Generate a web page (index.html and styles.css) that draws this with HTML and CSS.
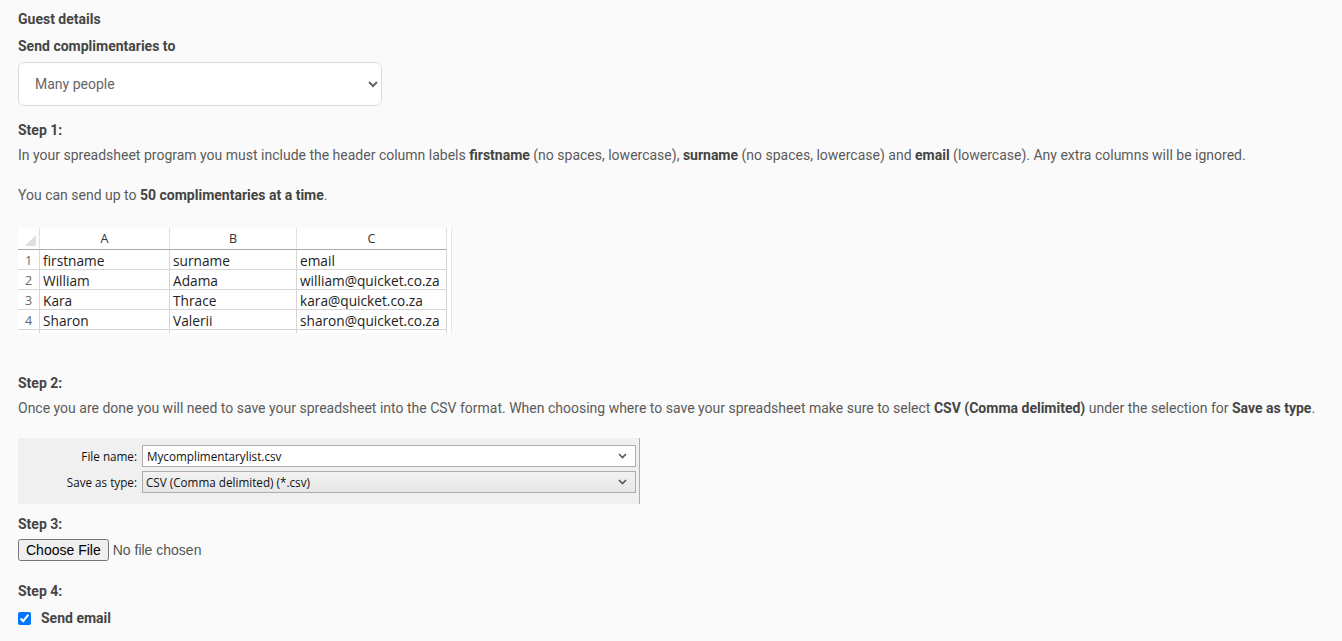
FILE: index.html
```html
<!DOCTYPE html>
<html>
<head>
<meta charset="utf-8">
<link rel="stylesheet" href="styles.css">
</head>
<body>
<div class="page">
  <div class="label">Guest details</div>
  <div class="label send-to">Send complimentaries to</div>
  <select class="people">
    <option>Many people</option>
    <option>One person</option>
  </select>

  <div class="label step1">Step 1:</div>
  <p class="para p1">In your spreadsheet program you must include the header column labels <b>firstname</b> (no spaces, lowercase), <b>surname</b> (no spaces, lowercase) and <b>email</b> (lowercase). Any extra columns will be ignored.</p>
  <p class="para p2">You can send up to <b>50 complimentaries at a time</b>.</p>

  <div class="sheet">
    <div class="c corner"><span class="tri"></span></div>
    <div class="c colhead">A</div>
    <div class="c colhead">B</div>
    <div class="c colhead">C</div>

    <div class="c rownum">1</div><div class="c">firstname</div><div class="c">surname</div><div class="c">email</div>
    <div class="c rownum">2</div><div class="c">William</div><div class="c">Adama</div><div class="c">william@quicket.co.za</div>
    <div class="c rownum">3</div><div class="c">Kara</div><div class="c">Thrace</div><div class="c">kara@quicket.co.za</div>
    <div class="c rownum">4</div><div class="c">Sharon</div><div class="c">Valerii</div><div class="c">sharon@quicket.co.za</div>
    <div class="c tail"></div><div class="c tail"></div><div class="c tail"></div><div class="c tail"></div>
  </div>

  <div class="label step2">Step 2:</div>
  <p class="para p3">Once you are done you will need to save your spreadsheet into the CSV format. When choosing where to save your spreadsheet make sure to select <b>CSV (Comma delimited)</b> under the selection for <b>Save as type</b>.</p>

  <div class="dialog">
    <div class="drow">
      <span class="dlabel">File name:</span>
      <div class="dfield white"><span>Mycomplimentarylist.csv</span>
        <svg class="dchev" width="9" height="6" viewBox="0 0 9 6"><path d="M1 1 L4.5 4.5 L8 1" fill="none" stroke="#555" stroke-width="1.6"/></svg>
      </div>
    </div>
    <div class="drow">
      <span class="dlabel">Save as type:</span>
      <div class="dfield grey"><span>CSV (Comma delimited) (*.csv)</span>
        <svg class="dchev" width="9" height="6" viewBox="0 0 9 6"><path d="M1 1 L4.5 4.5 L8 1" fill="none" stroke="#555" stroke-width="1.6"/></svg>
      </div>
    </div>
  </div>

  <div class="label step3">Step 3:</div>
  <input class="file" type="file">

  <div class="label step4">Step 4:</div>
  <label class="check"><input type="checkbox" checked><span>Send email</span></label>
</div>
</body>
</html>
```

FILE: styles.css
```css
html, body {
  margin: 0;
  padding: 0;
  background: #fafafa;
}
body {
  font-family: Roboto, "Liberation Sans", sans-serif;
  font-size: 14px;
  color: #5a5a5a;
}
.page {
  padding: 9px 18px 0 18px;
}
.label {
  font-weight: 700;
  font-size: 14px;
  line-height: 20px;
  color: #454545;
}
.send-to { margin-top: 7px; }
.people {
  display: block;
  margin-top: 6px;
  width: 364px;
  height: 44px;
  border: 1px solid #dcdcdc;
  border-radius: 6px;
  background: #fff;
  padding: 0 10px 0 12px;
  font-family: Roboto, "Liberation Sans", sans-serif;
  font-size: 14px;
  color: #666;
}
.step1 { margin-top: 14px; }
.para {
  margin: 0;
  line-height: 20px;
  font-size: 14px;
}
.para b { font-weight: 700; color: #444; }
.p1 { margin-top: 5px; }
.p2 { margin-top: 20px; }

.sheet {
  margin-top: 23px;
  width: 431px;
  display: grid;
  grid-template-columns: 22px 130px 127px 150px;
  grid-template-rows: 22px 20px 20px 20px 20px 3px;
  background: #fff;
  font-family: "Open Sans", "Noto Sans", sans-serif;
  font-size: 13.7px;
  color: #222;
  border-right: 2px solid #fff;
  box-shadow: 1px 0 0 #e6e6e6;
}
.c {
  border-right: 1px solid #d6d6d6;
  border-bottom: 1px solid #d6d6d6;
  padding-left: 3px;
  line-height: 21px;
  white-space: nowrap;
  overflow: hidden;
}
.colhead, .corner {
  border-bottom: 1px solid #ababab;
  text-align: center;
  padding-left: 0;
  font-size: 12.5px;
  color: #333;
  line-height: 22px;
  border-right-color: #e0e0e0;
}
.corner { position: relative; }
.tri {
  position: absolute;
  right: 3px;
  bottom: 3px;
  width: 0;
  height: 0;
  border-left: 11px solid transparent;
  border-bottom: 11px solid #dfdfdf;
}
.rownum {
  text-align: center;
  padding-left: 0;
  color: #666;
  font-size: 12.5px;
}
.tail { border-bottom: none; }

.step2 { margin-top: 40px; }
.p3 { margin-top: 5px; }

.dialog {
  margin-top: 20px;
  width: 622px;
  height: 66px;
  box-sizing: border-box;
  background: #f0f0f0;
  border-right: 1px solid #d7a85a;
  padding-top: 7px;
  display: flex;
  flex-direction: column;
  gap: 4px;
  font-family: "Open Sans", "Noto Sans", sans-serif;
  font-size: 11.7px;
  color: #111;
}
.drow {
  display: flex;
  align-items: center;
}
.dlabel {
  width: 119px;
  text-align: right;
  padding-right: 5px;
}
.dfield {
  width: 494px;
  height: 22px;
  box-sizing: border-box;
  border: 1px solid #acacac;
  display: flex;
  align-items: center;
  justify-content: space-between;
  padding: 0 8px 0 4px;
}
.dfield.white { background: #fff; }
.dfield.grey { background: linear-gradient(#f2f2f2, #e6e6e6); padding-left: 3px; }

.step3 { margin-top: 10px; }
.file {
  display: block;
  margin-top: 5px;
  font-family: "Liberation Sans", Arial, sans-serif;
  font-size: 14px;
  color: #555;
}
.step4 { margin-top: 20px; }
.check {
  margin-top: 7px;
  display: flex;
  align-items: center;
  gap: 10px;
  font-weight: 700;
  font-size: 14px;
  color: #454545;
  line-height: 20px;
}
.check input {
  margin: 0;
  width: 13px;
  height: 13px;
}
```
